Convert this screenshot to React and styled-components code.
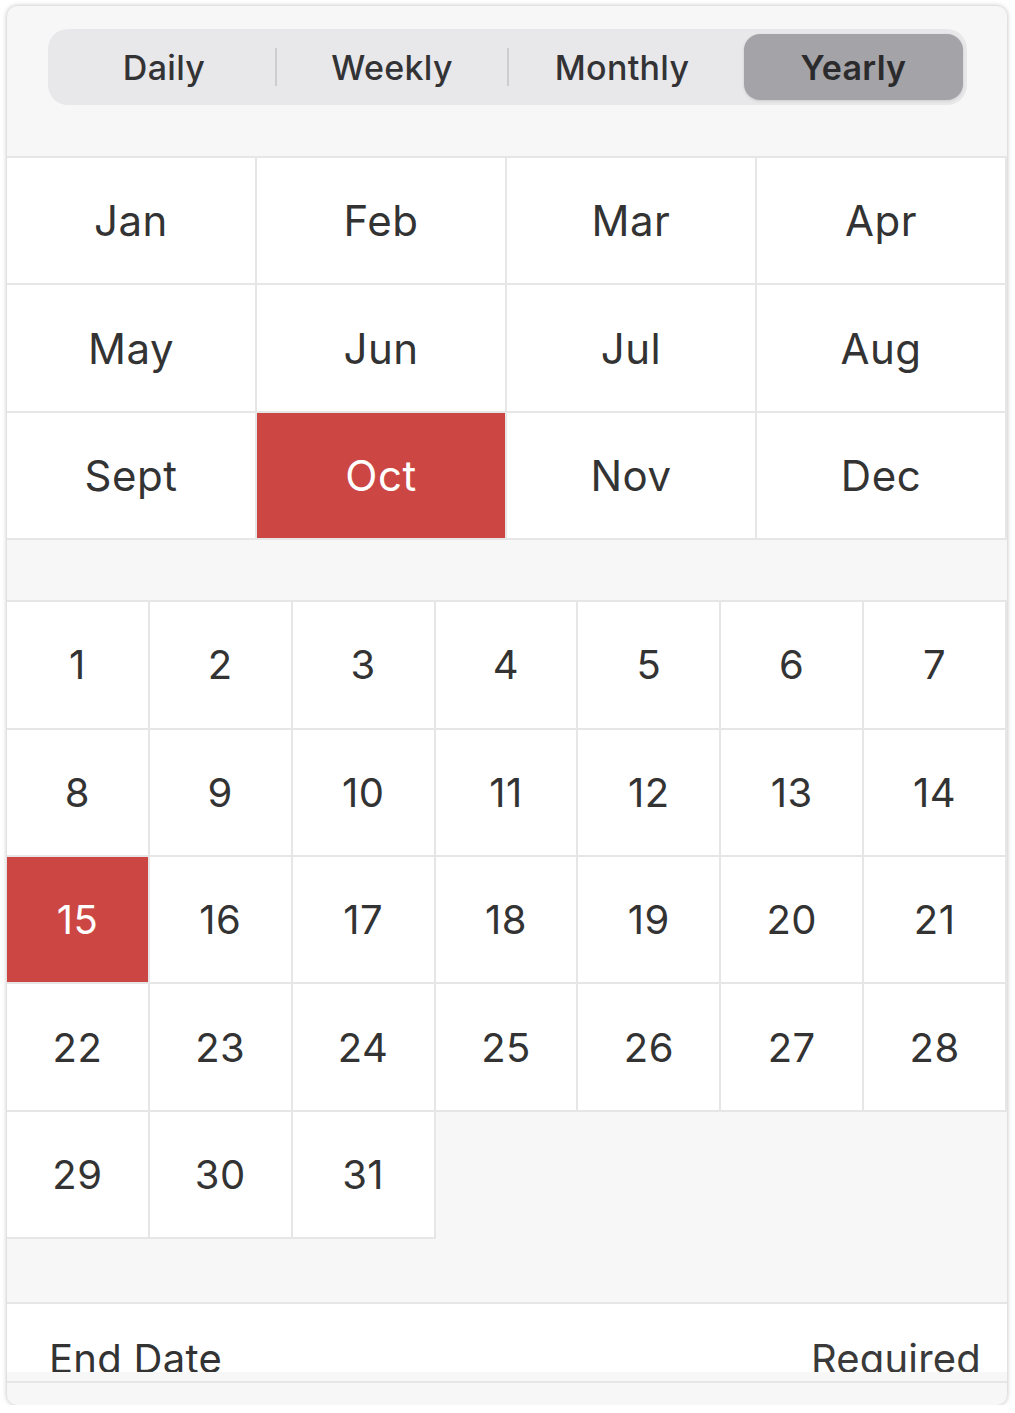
import React from "react";
import styled, { createGlobalStyle } from "styled-components";

const GlobalStyle = createGlobalStyle`
   html, body {
      margin: 0;
      padding: 0;
      background: #ffffff;
   }
   body {
      font-family: Inter, "Noto Sans", "Liberation Sans", sans-serif;
      color: #333333;
   }
`;

const LINE = "#e6e6e6";
const RED = "#cc4644";

const Card = styled.div`
   box-sizing: border-box;
   width: 1000px;
   height: 1399px;
   margin: 6px 0 0 7px;
   background: #f7f7f7;
   border-radius: 10px;
   box-shadow: 0 0 5px rgba(0, 0, 0, 0.28);
   overflow: hidden;
   display: flex;
   flex-direction: column;
`;

const SegmentBar = styled.div`
   box-sizing: border-box;
   margin: 23px 40px 0 41px;
   height: 76px;
   padding: 5px 4px;
   background: #e8e8ea;
   border-radius: 20px;
   display: grid;
   grid-template-columns: 224px 232px 228px 1fr;
`;

const Segment = styled.div`
   position: relative;
   display: flex;
   align-items: center;
   justify-content: center;
   font-size: 34px;
   font-weight: ${(p) => (p.$active ? 600 : 500)};
   letter-spacing: 0.3px;
   color: ${(p) => (p.$active ? "#2b2b2d" : "#333336")};
   background: ${(p) => (p.$active ? "#a4a3a7" : "transparent")};
   border-radius: 16px;
   margin-left: ${(p) => (p.$active ? "8px" : "0")};
   box-shadow: ${(p) => (p.$active ? "0 1px 3px rgba(0,0,0,0.12)" : "none")};

   &::after {
      content: "";
      display: ${(p) => (p.$divider ? "block" : "none")};
      position: absolute;
      right: -1px;
      top: 14px;
      bottom: 14px;
      width: 2px;
      background: #cdcdd0;
   }
`;

const Grid = styled.div`
   display: grid;
   grid-template-columns: repeat(${(p) => p.$cols}, 1fr);
   grid-auto-rows: 127.4px;
   border-top: 2px solid ${LINE};
   margin-top: ${(p) => p.$top}px;
`;

const Cell = styled.div`
   box-sizing: border-box;
   display: flex;
   align-items: center;
   justify-content: center;
   background: ${(p) => (p.$selected ? RED : "#ffffff")};
   color: ${(p) => (p.$selected ? "#ffffff" : "#333333")};
   border-right: 2px solid ${LINE};
   border-bottom: 2px solid ${LINE};
   font-size: ${(p) => p.$size}px;
   font-weight: 400;
   letter-spacing: 0.5px;
`;

const FieldRow = styled.div`
   box-sizing: border-box;
   margin-top: 63px;
   border-top: 2px solid ${LINE};
   height: 70px;
   padding: 31px 26px 0 42px;
   background: #ffffff;
   overflow: hidden;
   display: flex;
   justify-content: space-between;
   font-size: 40px;
   line-height: 48px;
   color: #333333;
`;

const Label = styled.span`
   letter-spacing: 0.3px;
`;

const Hint = styled.span`
   color: #3a3a3a;
   letter-spacing: 0.2px;
`;

const FooterStrip = styled.div`
   height: 9px;
   border-bottom: 2px solid ${LINE};
`;

const MONTHS = ["Jan", "Feb", "Mar", "Apr", "May", "Jun", "Jul", "Aug", "Sept", "Oct", "Nov", "Dec"];
const DAYS = Array.from({ length: 31 }, (_, i) => i + 1);
const MODES = ["Daily", "Weekly", "Monthly", "Yearly"];

export default function App() {
   const activeMode = "Yearly";
   const activeMonth = "Oct";
   const activeDay = 15;

   return (
      <>
         <GlobalStyle />
         <Card>
            <SegmentBar>
               {MODES.map((m, i) => (
                  <Segment key={m} $active={m === activeMode} $divider={i < 2}>
                     {m}
                  </Segment>
               ))}
            </SegmentBar>

            <Grid $cols={4} $top={51}>
               {MONTHS.map((m) => (
                  <Cell key={m} $size={42} $selected={m === activeMonth}>
                     {m}
                  </Cell>
               ))}
            </Grid>

            <Grid $cols={7} $top={60}>
               {DAYS.map((d) => (
                  <Cell key={d} $size={40} $selected={d === activeDay}>
                     {d}
                  </Cell>
               ))}
            </Grid>

            <FieldRow>
               <Label>End Date</Label>
               <Hint>Required</Hint>
            </FieldRow>
            <FooterStrip />
         </Card>
      </>
   );
}
